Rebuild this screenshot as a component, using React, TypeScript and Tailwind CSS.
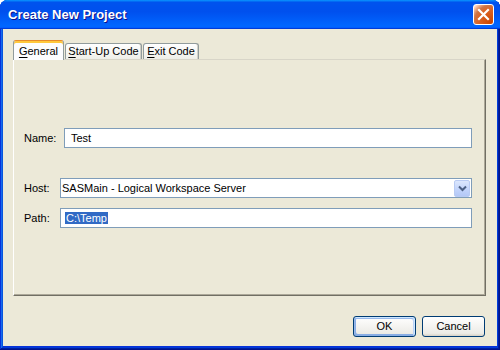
import React from "react";

const font = { fontFamily: '"Liberation Sans", Arial, sans-serif' };

function Tab({ label, u, selected, w }: { label: string; u: number; selected?: boolean; w: number }) {
  const pre = label.slice(0, u);
  const ch = label.slice(u, u + 1);
  const post = label.slice(u + 1);
  return (
    <div
      style={{ width: w }}
      className={
        selected
          ? "relative z-10 -mb-px flex h-[20px] items-center justify-center rounded-t-[3px] border border-b-0 border-t-[#E68B2C] border-x-[#919B9C] bg-[#FCFCFE] pt-[1px] text-[11px] text-black shadow-[inset_0_2px_#FFC83C]"
          : "flex h-[16px] items-center justify-center rounded-t-[3px] border border-b-0 border-[#919B9C] bg-[linear-gradient(180deg,#fff,#fafaf9_26%,#f0f0ea_95%,#ecebe5)] text-[11px] text-black shadow-[inset_-1px_0_#d1d0c7]"
      }
    >
      <span className="leading-none">
        {pre}
        <u className="underline-offset-[2px]">{ch}</u>
        {post}
      </span>
    </div>
  );
}

function XpButton({ children, def }: { children: React.ReactNode; def?: boolean }) {
  return (
    <div
      className={
        "flex h-[21px] w-[63px] items-center justify-center rounded-[3px] border border-[#003C74] bg-[linear-gradient(180deg,#fff,#ecebe6_86%,#d6d0c5)] text-[11px] text-black " +
        (def ? "shadow-[inset_-1px_1px_#cee7ff,inset_1px_2px_#98b8ea,inset_-2px_2px_#bcd4f6,inset_1px_-1px_#89ade4,inset_2px_-2px_#89ade4]" : "")
      }
    >
      {children}
    </div>
  );
}

export default function App() {
  return (
    <div style={font} className="h-[350px] w-[500px] bg-white">
      <div className="flex h-[350px] w-[500px] flex-col rounded-t-[8px] bg-[#0831d9] shadow-[inset_-1px_-1px_#00138c,inset_1px_1px_#0831d9,inset_-2px_-2px_#001ea0,inset_2px_2px_#166aee,inset_-3px_-3px_#003bda,inset_3px_3px_#0855dd]">
        {/* Title bar */}
        <div className="flex h-[29px] shrink-0 items-center justify-between rounded-t-[7px] bg-[linear-gradient(180deg,#0997ff,#0053ee_8%,#0050ee_40%,#0066ff_88%,#0066ff_93%,#005bff_95%,#003dd7_96%,#003dd7)] pl-[8px] pr-[6px]">
          <span className="text-[13px] font-bold tracking-[0px] text-white [text-shadow:1px_1px_#0f1089]">
            Create New Project
          </span>
          <div className="flex h-[21px] w-[21px] items-center justify-center rounded-[3px] border border-white bg-[radial-gradient(circle_at_90%_90%,#cc4600_0%,#dc6527_55%,#cd7546_70%,#ffccb2_90%,#ffffff_100%)]">
            <svg width="13" height="13" viewBox="0 0 13 13">
              <path d="M2 2 L11 11 M11 2 L2 11" stroke="white" strokeWidth="2.2" strokeLinecap="square" />
            </svg>
          </div>
        </div>

        {/* Body */}
        <div className="mx-[3px] mb-[4px] flex flex-1 flex-col bg-[#ECE9D8] pl-[10px] pr-[11px] pt-[11px]">
          {/* Tabs */}
          <div className="flex items-end">
            <Tab label="General" u={0} selected w={51} />
            <div className="ml-[1px]">
              <Tab label="Start-Up Code" u={0} w={77} />
            </div>
            <div className="ml-[1px]">
              <Tab label="Exit Code" u={0} w={56} />
            </div>
          </div>

          {/* Panel */}
          <div className="flex h-[237px] flex-col border-l border-t border-l-white border-t-[#D8D5C8] border-r border-b border-r-[#716F64] border-b-[#716F64] pl-[10px] pr-[13px] pt-[68px] text-[11px] text-black shadow-[inset_-1px_-1px_#ACA899]">
            <div className="flex h-[20px] items-center">
              <span className="w-[40px]">Name:</span>
              <div className="flex h-[20px] flex-1 items-center border border-[#7F9DB9] bg-white pl-[6px]">Test</div>
            </div>
            <div className="mt-[30px] flex h-[20px] items-center">
              <span className="w-[36px]">Host:</span>
              <div className="flex h-[20px] flex-1 items-center border border-[#7F9DB9] bg-white pl-[1px] pr-[1px]">
                <span className="flex-1">SASMain - Logical Workspace Server</span>
                <div className="flex h-[17px] w-[16px] items-center justify-center rounded-[2px] border border-[#B9CBF3] bg-[linear-gradient(180deg,#dce7fd,#c1d3fb_60%,#b4c8f6)]">
                  <svg width="9" height="7" viewBox="0 0 9 7">
                    <path d="M1 1.5 L4.5 5 L8 1.5" stroke="#4D6185" strokeWidth="2" fill="none" />
                  </svg>
                </div>
              </div>
            </div>
            <div className="mt-[10px] flex h-[20px] items-center">
              <span className="w-[36px]">Path:</span>
              <div className="flex h-[20px] flex-1 items-center border border-[#7F9DB9] bg-white pl-[4px]">
                <span className="bg-[#316AC5] px-[1px] leading-[12px] text-white">C:\Temp</span>
              </div>
            </div>
          </div>

          {/* Buttons */}
          <div className="mt-[20px] flex justify-end gap-[6px] pr-[1px]">
            <XpButton def>OK</XpButton>
            <XpButton>Cancel</XpButton>
          </div>
        </div>
      </div>
    </div>
  );
}
